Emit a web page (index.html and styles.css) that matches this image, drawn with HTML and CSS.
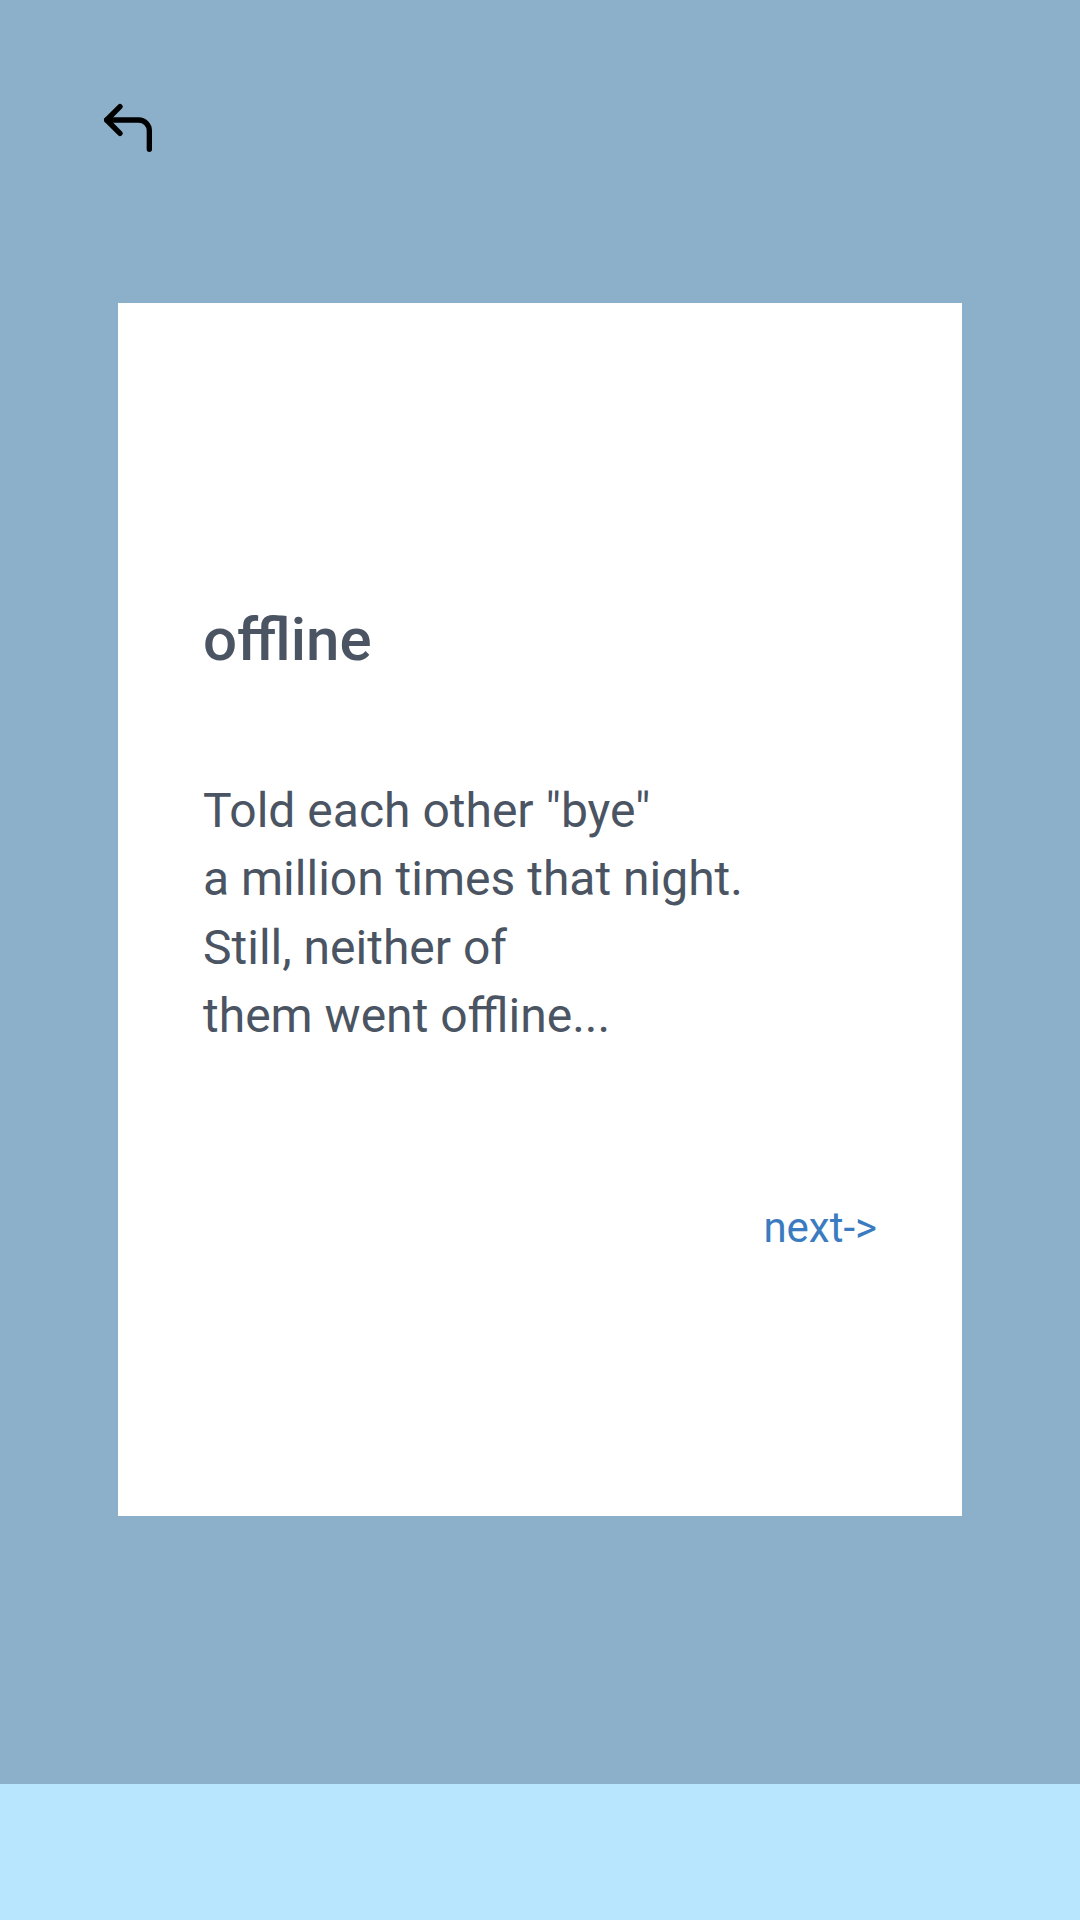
FILE: index.html
```html
<!DOCTYPE html>
<html lang="en">
<head>
<meta charset="utf-8">
<title>offline</title>
<link rel="stylesheet" href="styles.css">
</head>
<body>
<div class="screen">
  <main class="main">
    <header class="topbar">
      <button class="back" aria-label="Back">
        <svg viewBox="0 0 24 24" width="64" height="64" fill="none" stroke="#000" stroke-width="2" stroke-linecap="round" stroke-linejoin="round">
          <polyline points="9 14 4 9 9 4"></polyline>
          <path d="M20 20v-7a4 4 0 0 0-4-4H4"></path>
        </svg>
      </button>
    </header>
    <section class="card">
      <h1 class="title">offline</h1>
      <p class="poem">Told each other "bye"<br>a million times that night.<br>Still, neither of<br>them went offline...</p>
      <div class="actions"><a class="next" href="#">next-&gt;</a></div>
    </section>
  </main>
  <footer class="band"></footer>
</div>
</body>
</html>
```
FILE: styles.css
```css
html, body {
  margin: 0;
  padding: 0;
}
body {
  width: 1080px;
  height: 1920px;
  overflow: hidden;
  font-family: Roboto, "Noto Sans", sans-serif;
  background: #8cb0c9;
}
.screen {
  display: flex;
  flex-direction: column;
  height: 1920px;
}
.main {
  height: 1784px;
  display: flex;
  flex-direction: column;
}
.topbar {
  padding: 96px 0 0 96px;
  height: 303px;
  box-sizing: border-box;
}
.back {
  display: block;
  width: 64px;
  height: 64px;
  padding: 0;
  border: 0;
  background: none;
}
.back svg { display: block; }
.card {
  margin-left: 118px;
  width: 844px;
  height: 1213px;
  box-sizing: border-box;
  background: #fff;
  padding: 302px 85px 0 85px;
  display: flex;
  flex-direction: column;
}
.title {
  margin: 0;
  font-size: 60px;
  font-weight: 500;
  line-height: 70px;
  color: #4a5462;
}
.poem {
  margin: 102px 0 0 0;
  font-size: 48px;
  font-weight: 400;
  line-height: 68.3px;
  color: #4a5462;
}
.actions {
  display: flex;
  justify-content: flex-end;
  margin-top: 153px;
}
.next {
  font-size: 42px;
  line-height: normal;
  color: #3b7bc0;
  text-decoration: none;
}
.band {
  height: 136px;
  background: #b8e6fe;
}
```
